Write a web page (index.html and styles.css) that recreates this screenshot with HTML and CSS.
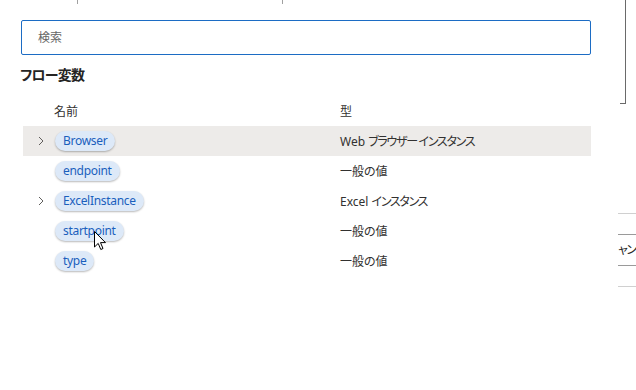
FILE: index.html
```html
<!DOCTYPE html>
<html lang="ja">
<head>
    <meta charset="UTF-8">
    <meta name="viewport" content="width=device-width, initial-scale=1.0">
    <title>フロー変数</title>
    <link rel="stylesheet" href="styles.css">
</head>
<body>
    <div class="main">
        <div class="tabbar">
            <span class="tab tab-first"></span>
            <span class="tab tab-second"></span>
        </div>

        <div class="search">
            <span class="search-placeholder">検索</span>
        </div>

        <h2 class="section-title">フロー変数</h2>

        <div class="var-table">
            <div class="var-row var-head">
                <span class="cell-toggle"></span>
                <span class="cell-name">名前</span>
                <span class="cell-type">型</span>
            </div>

            <div class="var-row selected">
                <span class="cell-toggle">
                    <svg class="chevron" width="8" height="10" viewBox="0 0 8 10"><polyline points="2,1 6,5 2,9"/></svg>
                </span>
                <span class="cell-name"><span class="pill">Browser</span></span>
                <span class="cell-type">Web <span class="kana">ブラウザー インスタンス</span></span>
            </div>

            <div class="var-row">
                <span class="cell-toggle"></span>
                <span class="cell-name"><span class="pill">endpoint</span></span>
                <span class="cell-type">一般の値</span>
            </div>

            <div class="var-row">
                <span class="cell-toggle">
                    <svg class="chevron" width="8" height="10" viewBox="0 0 8 10"><polyline points="2,1 6,5 2,9"/></svg>
                </span>
                <span class="cell-name"><span class="pill">ExcelInstance</span></span>
                <span class="cell-type">Excel <span class="kana">インスタンス</span></span>
            </div>

            <div class="var-row">
                <span class="cell-toggle"></span>
                <span class="cell-name">
                    <span class="pill">startpoint
                        <!-- mouse pointer -->
                        <svg class="cursor" width="13" height="20" viewBox="0 0 13 20"><path d="M0.5,0.5 L0.5,16 L4.2,12.4 L6.8,18.5 L9,17.5 L6.5,11.6 L11.5,11.6 Z"/></svg>
                    </span>
                </span>
                <span class="cell-type">一般の値</span>
            </div>

            <div class="var-row">
                <span class="cell-toggle"></span>
                <span class="cell-name"><span class="pill">type</span></span>
                <span class="cell-type">一般の値</span>
            </div>
        </div>
    </div>

    <div class="side">
        <div class="side-scroll"></div>
        <div class="side-list">
            <div class="side-item light"></div>
            <div class="side-item dark"><span class="kana">ャン</span></div>
            <div class="side-item dark last"></div>
        </div>
    </div>
</body>
</html>
```

FILE: styles.css
```css
body {
    margin: 0;
    padding: 0;
    width: 636px;
    height: 390px;
    overflow: hidden;
    background: #fff;
    color: #323130;
    font-family: 'Noto Sans', 'Noto Sans CJK JP', sans-serif;
    font-size: 12px;
    font-feature-settings: "palt";
    display: flex;
}

.main {
    flex-shrink: 0;
    width: 570px;
    padding: 0 19px 0 21px;
}

.kana {
    letter-spacing: -1.3px;
}

.tabbar {
    display: flex;
    height: 4px;
}

.tab {
    height: 4px;
    border-right: 1px solid #a0a0a0;
}

.tab-first {
    width: 56px;
}

.tab-second {
    width: 204px;
}

.search {
    margin-top: 16px;
    height: 33px;
    border: 1px solid #1c6cc4;
    border-radius: 2px;
    display: flex;
    align-items: center;
    padding-left: 16px;
}

.search-placeholder {
    color: #666;
    font-size: 12px;
    margin-top: -1px;
}

.section-title {
    margin: 10px 0 0 -1px;
    font-size: 14px;
    font-weight: 700;
    line-height: 20px;
    letter-spacing: -0.8px;
    color: #252423;
}

.var-table {
    margin: 11px 0 0 2px;
}

.var-row {
    display: grid;
    grid-template-columns: 32px 285px 1fr;
    align-items: center;
    height: 30px;
}

.var-head .cell-name {
    margin-left: -1px;
}

.var-row.selected {
    background: #edebe9;
}

.cell-toggle {
    display: flex;
    align-items: center;
    padding-left: 14px;
}

.chevron polyline {
    fill: none;
    stroke: #605e5c;
    stroke-width: 1;
}

.pill {
    position: relative;
    display: inline-block;
    height: 20px;
    line-height: 19px;
    padding: 0 8px;
    border-radius: 10px;
    background: #dde9f8;
    color: #1a5fbd;
    letter-spacing: -0.3px;
    box-shadow: 0 1px 2px rgba(0, 0, 0, 0.28);
}

.cursor {
    position: absolute;
    left: 39px;
    top: 10px;
}

.cursor path {
    fill: #fff;
    stroke: #000;
    stroke-width: 1;
    stroke-linejoin: miter;
}

.side {
    flex: 1;
}

.side-scroll {
    margin-left: 10px;
    width: 5px;
    height: 103px;
    border-right: 1px solid #6a6a6a;
    border-bottom: 1px solid #6a6a6a;
}

.side-list {
    margin: 109px 0 0 8px;
}

.side-item {
    border-top: 1px solid #d0d0d0;
    height: 20px;
}

.side-item.dark {
    border-top-color: #9a9a9a;
    height: 30px;
    line-height: 30px;
    font-size: 12px;
    color: #252423;
    white-space: nowrap;
    overflow: hidden;
}

.side-item.last {
    height: 20px;
    border-bottom: 1px solid #d0d0d0;
}
```
